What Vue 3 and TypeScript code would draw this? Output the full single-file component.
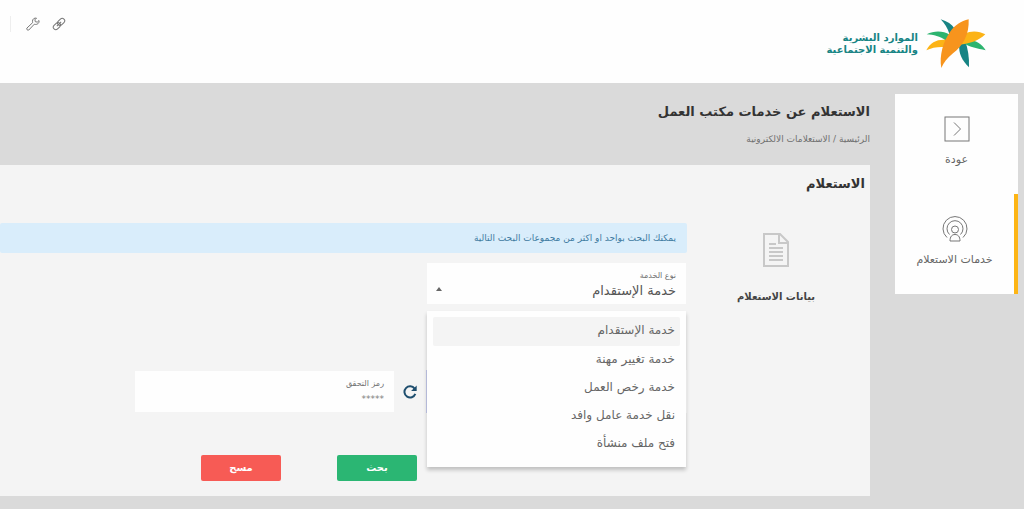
<script setup lang="ts">
import { ref } from 'vue'

const services: string[] = [
  'خدمة الإستقدام',
  'خدمة تغيير مهنة',
  'خدمة رخص العمل',
  'نقل خدمة عامل وافد',
  'فتح ملف منشأة',
]
const selected = ref<string>(services[0])
const open = ref<boolean>(true)
const code = ref<string>('')

function choose(service: string): void {
  selected.value = service
  open.value = false
}
function clearForm(): void {
  code.value = ''
  selected.value = services[0]
}
</script>

<template>
  <div class="page" dir="rtl" lang="ar">
    <header class="header">
      <a class="brand" href="#">
        <svg class="brand-mark" viewBox="12 13 180 150" aria-hidden="true">
          <path fill="#178484" d="M56 14C76 20 90 29 97 41L83 60C77 40 68 26 56 14Z" />
          <path fill="#178484" d="M112 89L128 77C138 100 142 128 141 158C120 138 109 116 112 89Z" />
          <path fill="#2cb46f" d="M14 59C38 47 64 49 83 60L72 78C54 65 35 60 14 59Z" />
          <path fill="#fcb316" d="M13 107C26 82 46 73 76 76L66 97C47 96 28 99 13 107Z" />
          <path fill="#2cb46f" d="M126 77C154 72 178 85 191 107C166 101 144 98 124 85Z" />
          <path fill="#fcb316" d="M110 90L128 57C148 47 172 49 190 59C171 77 145 88 110 90Z" />
          <path fill="#f7941d" d="M140 14C142 58 124 93 93 116C76 130 65 144 58 160C51 123 64 80 84 52C98 32 117 19 140 14Z" />
        </svg>
        <span class="brand-text">الموارد البشرية<br />والتنمية الاجتماعية</span>
      </a>
      <nav class="tools" aria-label="أدوات">
        <a href="#" aria-label="روابط">
          <svg viewBox="0 0 14 14" class="tool-icon">
            <g transform="rotate(-45 7 7)">
              <rect x="0" y="4.5" width="8" height="5" rx="2.5" />
              <rect x="6" y="4.5" width="8" height="5" rx="2.5" />
              <path d="M4 7H10" />
            </g>
          </svg>
        </a>
        <a href="#" aria-label="إعدادات">
          <svg viewBox="0 0 14 14" class="tool-icon">
            <path d="M10.500 1.200C8.500 .5 6.300 2.200 6.500 4.300L6.700 5.600L.9 11.100C.1 12.200 1.700 13.800 2.800 13L8.300 7.200C11 8.200 13.700 6 13 3.500L11.300 5.100L9.300 4.700L8.900 2.800Z" />
          </svg>
        </a>
      </nav>
    </header>

    <div class="body">
      <nav class="sidebar" aria-label="القائمة">
        <a class="side-item" href="#">
          <svg class="side-icon" viewBox="0 0 26 26" aria-hidden="true">
            <rect x="1" y="1" width="24" height="24" />
            <path d="M10 6.500L16.500 13L10 19.500" />
          </svg>
          <span>عودة</span>
        </a>
        <a class="side-item active" href="#">
          <svg class="side-icon" viewBox="0 0 26 26" aria-hidden="true">
            <path d="M5 21.500A12 12 0 1 1 21 21.500" />
            <path d="M7.500 18.500A8 8 0 1 1 18.500 18.500" />
            <circle cx="13" cy="13.500" r="3.500" />
            <path d="M8 25C8 20.500 10 18.500 13 18.500S18 20.500 18 25Z" />
          </svg>
          <span>خدمات الاستعلام</span>
        </a>
      </nav>

      <main class="main">
        <h1>الاستعلام عن خدمات مكتب العمل</h1>
        <p class="crumbs"><a href="#">الرئيسية</a> / <a href="#">الاستعلامات الالكترونية</a></p>

        <section class="panel">
          <h2>الاستعلام</h2>
          <div class="panel-body">
            <div class="section-label">
              <svg class="doc-icon" viewBox="0 0 26 34" aria-hidden="true">
                <path d="M1 1H17L25 9V33H1Z" />
                <path d="M16 1V10H25M6 11H13M6 15H20M6 19H20M6 23H20M6 27H20" />
              </svg>
              <h3>بيانات الاستعلام</h3>
            </div>

            <form class="form" @submit.prevent>
              <p class="notice">يمكنك البحث بواحد او اكثر من مجموعات البحث التالية</p>

              <div class="field select-field">
                <label for="service">نوع الخدمة</label>
                <select id="service" v-model="selected" @mousedown.prevent="open = !open">
                  <option v-for="s in services" :key="s" :value="s">{{ s }}</option>
                </select>
                <span class="caret"></span>
                <ul v-if="open" class="menu" role="listbox" aria-label="نوع الخدمة">
                  <li
                    v-for="s in services"
                    :key="s"
                    role="option"
                    :aria-selected="s === selected"
                    :class="{ current: s === selected }"
                    @click="choose(s)"
                  >{{ s }}</li>
                </ul>
              </div>

              <div class="captcha-row">
                <div class="captcha-image"></div>
                <button type="button" class="refresh" aria-label="تحديث الرمز">
                  <svg viewBox="0 0 14 14">
                    <path class="arc" d="M11.600 3.600A5.600 5.600 0 1 0 12.300 8.900" />
                    <path class="tip" d="M13.700 .4V6H8.100Z" />
                  </svg>
                </button>
                <div class="field">
                  <label for="code">رمز التحقق</label>
                  <input id="code" v-model="code" type="text" placeholder="*****" />
                </div>
              </div>

              <div class="actions">
                <button type="submit" class="btn search">بحث</button>
                <button type="button" class="btn clear" @click="clearForm">مسح</button>
              </div>
            </form>
          </div>
        </section>
      </main>
    </div>
  </div>
</template>

<style>
body {
  margin: 0;
  background: #dadada;
}
</style>

<style scoped>
.page {
  min-height: 100vh;
  background: #dadada;
  color: #666;
  font-family: "DejaVu Sans", sans-serif;
  font-size: 11px;
}
.page *,
.page {
  box-sizing: border-box;
}
a {
  color: inherit;
  text-decoration: none;
}
h1,
h2,
h3,
p,
ul {
  margin: 0;
  padding: 0;
}
button,
input,
select {
  font-family: inherit;
}
svg {
  display: block;
  fill: none;
}
.header {
  display: flex;
  justify-content: space-between;
  align-items: flex-start;
  height: 83px;
  padding: 16px 38px 0 10px;
  background: #fefefe;
}
.brand {
  display: flex;
  align-items: center;
  gap: 8px;
  padding-top: 3px;
}
.brand-mark {
  width: 60px;
  height: 50px;
}
.brand-text {
  color: #178484;
  font-size: 10px;
  line-height: 12px;
  font-weight: bold;
}
.tools {
  display: flex;
  gap: 12px;
  padding-left: 15px;
  border-left: 1px solid #eee;
}
.tool-icon {
  width: 14px;
  height: 16px;
  stroke: #777;
}
.body {
  display: flex;
  align-items: flex-start;
  gap: 25px;
  padding: 11px 6px 13px 0;
}
.sidebar {
  flex: 0 0 123px;
  background: #fefefe;
}
.side-item {
  display: flex;
  flex-direction: column;
  align-items: center;
  gap: 8px;
  height: 100px;
  padding-top: 22px;
  line-height: 20px;
}
.side-item.active {
  border-right: 4px solid #fdb515;
}
.side-icon {
  width: 26px;
  height: 26px;
  stroke: #777;
}
.main {
  flex: 1;
  min-width: 0;
}
h1 {
  padding-top: 6px;
  color: #333;
  font-size: 13px;
  line-height: 24px;
}
.crumbs {
  margin-top: 5px;
  color: #707070;
  font-size: 9px;
  line-height: 20px;
}
.panel {
  margin-top: 16px;
  padding: 8px 5px 15px 0;
  background: #f4f4f4;
}
h2 {
  color: #333;
  font-size: 13px;
  line-height: 22px;
}
.panel-body {
  display: flex;
  margin-top: 28px;
}
.section-label {
  display: flex;
  flex: 0 0 178px;
  flex-direction: column;
  align-items: center;
  padding-top: 10px;
}
.doc-icon {
  width: 26px;
  height: 34px;
  stroke: #c8c8c8;
  stroke-width: 2;
}
h3 {
  margin-top: 20px;
  color: #444;
  font-size: 10px;
  line-height: 20px;
}
.form {
  flex: 1;
  min-width: 0;
}
.notice {
  padding: 0 11px;
  background: #d9edfb;
  border-radius: 2px;
  color: #3f7ba1;
  font-size: 9px;
  line-height: 30px;
}
.field {
  position: relative;
  width: 259px;
  height: 41px;
  padding: 6px 10px 0;
  background: #fefefe;
}
.field label {
  display: block;
  color: #707070;
  font-size: 8px;
  line-height: 13px;
}
.field select,
.field input {
  display: block;
  width: 100%;
  height: 18px;
  padding: 0;
  border: 0;
  outline: 0;
  background: transparent;
  appearance: none;
  color: #555;
  font-size: 13px;
  line-height: 18px;
}
.field input {
  font-size: 9px;
}
.field input::placeholder {
  color: #808080;
}
.select-field {
  margin-top: 10px;
  margin-right: 1px;
}
.caret {
  position: absolute;
  left: 9px;
  top: 24px;
  border: 3px solid transparent;
  border-top: 0;
  border-bottom: 4px solid #666;
}
.menu {
  position: absolute;
  z-index: 2;
  top: 48px;
  right: 0;
  width: 100%;
  padding: 6px 6px 9px;
  background: #fefefe;
  box-shadow: 0 3px 4px rgba(0, 0, 0, 0.22);
  list-style: none;
}
.menu li {
  height: 28px;
  padding: 0 5px;
  border-radius: 2px;
  color: #666;
  font-size: 12px;
  line-height: 26px;
  cursor: pointer;
}
.menu li.current {
  height: 29px;
  background: #f4f4f4;
}
.captcha-row {
  display: flex;
  align-items: center;
  margin-top: 66px;
}
.captcha-image {
  width: 261px;
  height: 43px;
  background: #fefefe;
  border-left: 1px solid #c5cbed;
}
.refresh {
  display: flex;
  justify-content: center;
  width: 32px;
  padding: 0;
  border: 0;
  background: transparent;
  cursor: pointer;
}
.refresh svg {
  width: 14px;
  height: 14px;
}
.arc {
  stroke: #1e4e6e;
  stroke-width: 2;
}
.tip {
  fill: #1e4e6e;
}
.actions {
  display: flex;
  gap: 56px;
  margin-top: 42px;
  padding-right: 270px;
}
.btn {
  width: 80px;
  height: 26px;
  padding: 0;
  border: 0;
  border-radius: 2px;
  color: #fff;
  font-size: 10px;
  font-weight: bold;
  line-height: 24px;
  cursor: pointer;
}
.search {
  background: #2bb673;
}
.clear {
  background: #f75b55;
}
</style>
